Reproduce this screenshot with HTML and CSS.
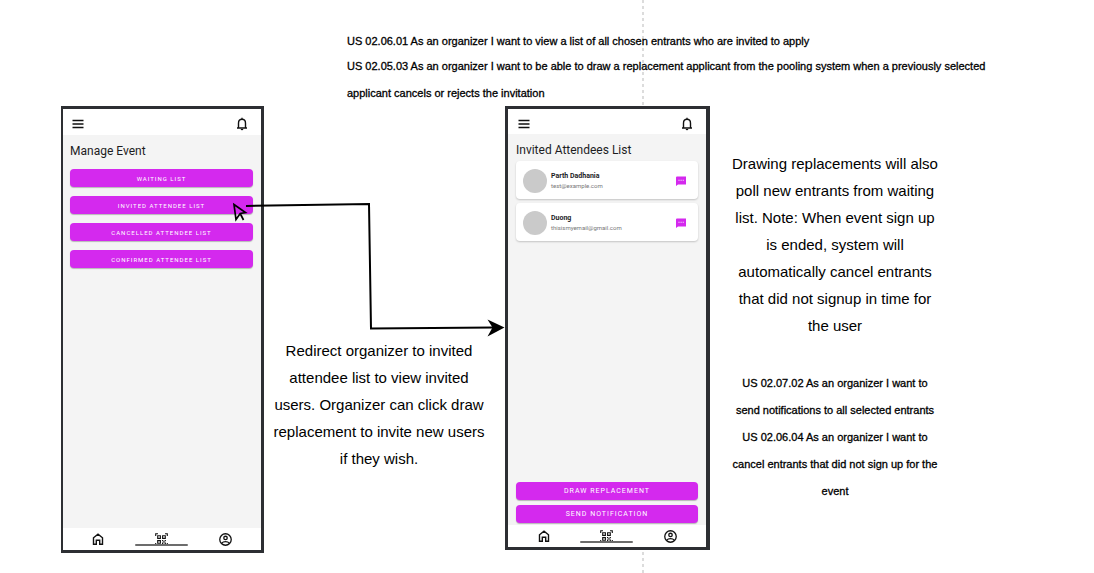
FILE: index.html
```
<!DOCTYPE html>
<html lang="en">
<head>
<meta charset="utf-8">
<meta name="viewport" content="width=device-width, initial-scale=1">
<title>Manage Event flow</title>
<link rel="stylesheet" href="styles.css">
</head>
<body>
<svg class="sprite" aria-hidden="true">
  <symbol id="menu" viewBox="0 0 12 12"><path d="M0.5 2.5h11M0.5 6h11M0.5 9.5h11" fill="none" stroke="currentColor" stroke-width="1.4"/></symbol>
  <symbol id="bell" viewBox="0 0 12 14"><path d="M1 11h10M2.5 11V6.2C2.5 3.8 4 2.3 6 2.3s3.5 1.5 3.5 3.9V11M6 2.3V0.8" fill="none" stroke="currentColor" stroke-width="1.4"/><path d="M4.7 12h2.6a1.3 1.3 0 0 1-2.6 0z" fill="currentColor"/></symbol>
  <symbol id="home" viewBox="0 0 12 12"><path d="M1.5 11.2V4.8L6 1.2l4.500 3.600V11.200H7.700V7.300H4.300v3.900z" fill="none" stroke="currentColor" stroke-width="1.4"/></symbol>
  <symbol id="qr" viewBox="0 0 13 13"><path d="M0.7 3V0.7H3M10 0.7h2.300V3M0.700 10v2.300H3M10 12.300h2.300V10M2.700 2.700h2.700v2.700H2.700zM7.600 2.700h2.700v2.700H7.600zM2.700 7.600h2.700v2.700H2.700z" fill="none" stroke="currentColor" stroke-width="1.100"/><path d="M7 7h1.300v1.300H7zM9.600 7h1.300v1.300H9.600zM8.300 8.300h1.300v1.300H8.300zM7 9.600h1.300v1.300H7zM9.600 9.600h1.300v1.300H9.600z" fill="currentColor"/></symbol>
  <symbol id="user" viewBox="0 0 12 12"><g fill="none" stroke="currentColor" stroke-width="1.2"><circle cx="6" cy="6" r="5.3"/><circle cx="6" cy="4.600" r="1.600"/><path d="M2.300 9.600C4.200 7.500 7.800 7.500 9.700 9.600"/></g></symbol>
  <symbol id="chat" viewBox="0 0 10 10"><path d="M1 0.500h9v8H2L0 10V1.500a1 1 0 0 1 1-1z" fill="#d429ee"/><path d="M2.500 3.800h1v1h-1zM4.600 3.800h1v1h-1zM6.700 3.800h1v1h-1z" fill="#fff"/></symbol>
</svg>

<main class="canvas">
  <div class="page-break"></div>

  <section class="note note-top">
    <p class="lead">US 02.06.01 As an organizer I want to view a list of all chosen entrants who are invited to apply</p>
    <p>US 02.05.03 As an organizer I want to be able to draw a replacement applicant from the pooling system when a previously selected applicant cancels or rejects the invitation</p>
  </section>

  <section class="phone phone-manage">
    <header class="phone-bar">
      <button class="icon-button" aria-label="Menu"><svg class="icon"><use href="#menu"/></svg></button>
      <button class="icon-button" aria-label="Notifications"><svg class="icon icon-bell"><use href="#bell"/></svg></button>
    </header>
    <div class="phone-body">
      <h1 class="phone-title">Manage Event</h1>
      <div class="actions actions-manage">
        <button class="action">WAITING LIST</button>
        <button class="action">INVITED ATTENDEE LIST</button>
        <button class="action">CANCELLED ATTENDEE LIST</button>
        <button class="action">CONFIRMED ATTENDEE LIST</button>
      </div>
    </div>
    <nav class="phone-nav">
      <a href="#home" aria-label="Home"><svg class="icon"><use href="#home"/></svg></a>
      <a href="#scan" aria-label="Scan" class="scan"><svg class="icon icon-nav"><use href="#qr"/></svg></a>
      <a href="#profile" aria-label="Profile"><svg class="icon icon-nav"><use href="#user"/></svg></a>
    </nav>
  </section>

  <section class="phone phone-invited">
    <header class="phone-bar">
      <button class="icon-button" aria-label="Menu"><svg class="icon"><use href="#menu"/></svg></button>
      <button class="icon-button" aria-label="Notifications"><svg class="icon icon-bell"><use href="#bell"/></svg></button>
    </header>
    <div class="phone-body">
      <h1 class="phone-title">Invited Attendees List</h1>
      <ul class="attendees">
        <li class="attendee">
          <span class="avatar"></span>
          <div class="who"><strong>Parth Dadhania</strong><span>test@example.com</span></div>
          <button class="icon-button" aria-label="Message Parth Dadhania"><svg class="icon icon-chat"><use href="#chat"/></svg></button>
        </li>
        <li class="attendee">
          <span class="avatar"></span>
          <div class="who"><strong>Duong</strong><span>thisismyemail@gmail.com</span></div>
          <button class="icon-button" aria-label="Message Duong"><svg class="icon icon-chat"><use href="#chat"/></svg></button>
        </li>
      </ul>
      <div class="actions actions-invited">
        <button class="action">DRAW REPLACEMENT</button>
        <button class="action">SEND NOTIFICATION</button>
      </div>
    </div>
    <nav class="phone-nav">
      <a href="#home" aria-label="Home"><svg class="icon"><use href="#home"/></svg></a>
      <a href="#scan" aria-label="Scan" class="scan"><svg class="icon icon-nav"><use href="#qr"/></svg></a>
      <a href="#profile" aria-label="Profile"><svg class="icon icon-nav"><use href="#user"/></svg></a>
    </nav>
  </section>

  <svg class="connector" viewBox="230 200 276 140" aria-hidden="true">
    <path d="M246 206L369 204L371 328.5L494 327.5" fill="none" stroke="#000" stroke-width="2"/>
    <path d="M504.5 327.5L487.5 319.5L492.5 327.5L487.5 336.5z"/>
    <path d="M234 204.5L245.5 212.5L240.2 213.5L236 219.5zM240.2 213.5L243.5 220" fill="none" stroke="#000" stroke-width="1.7"/>
  </svg>

  <p class="note note-redirect">Redirect organizer to invited attendee list to view invited users. Organizer can click draw replacement to invite new users if they wish.</p>
  <p class="note note-drawing">Drawing replacements will also poll new entrants from waiting list. Note: When event sign up is ended, system will automatically cancel entrants that did not signup in time for the user</p>
  <section class="note note-stories">
    <p>US 02.07.02 As an organizer I want to send notifications to all selected entrants</p>
    <p>US 02.06.04 As an organizer I want to cancel entrants that did not sign up for the event</p>
  </section>
</main>
</body>
</html>
```
FILE: styles.css
```
* { box-sizing: border-box; }

body {
  margin: 0;
  background: #fff;
  color: #000;
  font-family: "Liberation Sans", Arial, sans-serif;
}

p, h1, ul { margin: 0; padding: 0; }
button { border: 0; padding: 0; background: none; color: inherit; font: inherit; cursor: pointer; }
a { color: inherit; }

.sprite { position: absolute; width: 0; height: 0; }

/* Free canvas: frames, notes and the connector sit at their own places */
.canvas { position: relative; min-height: 100vh; }

.page-break {
  position: absolute;
  top: 0;
  bottom: 0;
  left: 642px;
  width: 2px;
  background: repeating-linear-gradient(#dcdcdc 0 3px, transparent 3px 6px);
}

.note { position: absolute; font-size: 15px; line-height: 27px; text-align: center; }
.note-top, .note-stories { font-size: 11px; -webkit-text-stroke: 0.3px #000; }
.note-top { left: 347px; top: 29px; width: 660px; text-align: left; }
.note-top .lead { line-height: 24px; }
.note-redirect { left: 271px; top: 337px; width: 216px; }
.note-drawing { left: 728px; top: 150px; width: 214px; }
.note-stories { left: 731px; top: 370px; width: 208px; }

.phone {
  position: absolute;
  display: flex;
  flex-direction: column;
  border: 3px solid #2d2f33;
  background: #f4f4f4;
  color: #1d1d1f;
  font-family: Roboto, sans-serif;
}
.phone-manage { left: 61px; top: 106px; width: 203px; height: 447px; border-left-width: 2px; }
.phone-invited { left: 505px; top: 106px; width: 205px; height: 444px; border-right-width: 4px; }

.phone-bar {
  display: flex;
  align-items: center;
  justify-content: space-between;
  height: 26px;
  padding: 4px 13px 0 10px;
  background: #fff;
}
.phone-manage .phone-bar { padding-left: 9px; }
.phone-invited .phone-bar { height: 25px; }
.icon-button { display: flex; }
.icon { display: block; width: 12px; height: 12px; color: #111; }
.icon-bell { height: 14px; }
.icon-nav { width: 13px; height: 13px; }
.icon-chat { width: 10px; height: 10px; }

.phone-body { flex: 1; display: flex; flex-direction: column; padding: 8px 8px 2px; }
.phone-manage .phone-body { padding-left: 7px; }
.phone-title { font-size: 12px; line-height: 16px; font-weight: 400; }

.actions { display: flex; flex-direction: column; }
.actions-manage { gap: 9px; margin-top: 10px; font-size: 6px; }
.actions-invited { gap: 5px; margin-top: auto; font-size: 7px; }
.action {
  height: 18px;
  border-radius: 4px;
  background: #d429ee;
  box-shadow: 0 1px 1px rgba(0, 0, 0, 0.25);
  color: #fff;
  letter-spacing: 1px;
}

.attendees { display: flex; flex-direction: column; gap: 4px; margin-top: 3px; list-style: none; }
.attendee {
  display: flex;
  align-items: center;
  gap: 4px;
  height: 38px;
  padding: 1px 12px 0 7px;
  border-radius: 4px;
  background: #fff;
  box-shadow: 0 1px 2px rgba(0, 0, 0, 0.2);
}
.avatar { width: 24px; height: 24px; border-radius: 50%; background: #cacaca; }
.who { flex: 1; display: flex; flex-direction: column; font-size: 6px; line-height: 9px; color: #777; }
.who strong { font-size: 7px; color: #1d1d1f; }

.phone-nav {
  display: grid;
  grid-template-columns: repeat(3, 1fr);
  place-items: center;
  height: 22px;
  padding: 0 4px;
  background: #fff;
}
.phone-manage .phone-nav { padding-left: 3px; }
.scan { position: relative; }
.scan::after {
  content: "";
  position: absolute;
  left: -20px;
  right: -20px;
  bottom: 0;
  height: 2px;
  border-radius: 1px;
  background: #6c6c6c;
}

.connector { position: absolute; left: 230px; top: 200px; width: 276px; height: 140px; }
```
